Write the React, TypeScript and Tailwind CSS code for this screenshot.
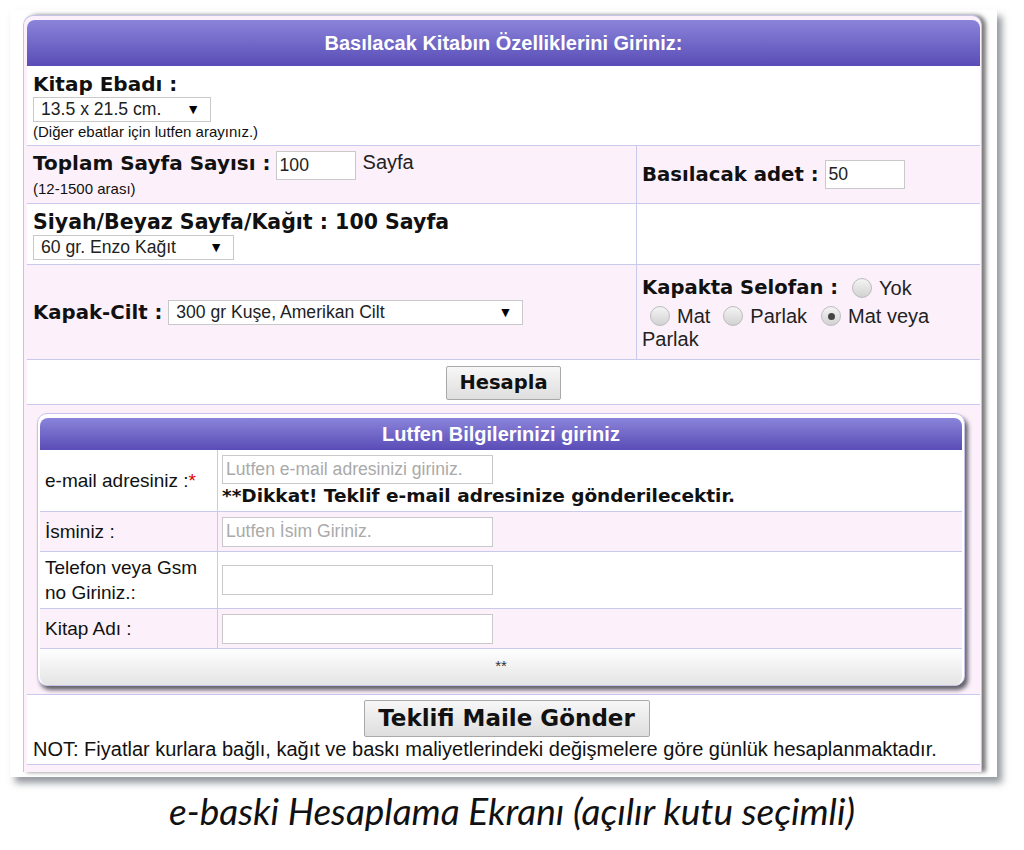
const verdana = "font-['DejaVu_Sans',sans-serif] font-bold";
const arial = "font-['Liberation_Sans',Arial,sans-serif]";

function Select({ text, width, arrowRight = 10 }: { text: string; width: number; arrowRight?: number }) {
  return (
    <div
      className={`${arial} flex h-[25px] items-center justify-between border border-[#c9c9c9] bg-white pl-[7px] text-[17.6px] text-[#222]`}
      style={{ width, paddingRight: arrowRight }}
    >
      <span>{text}</span>
      <span className="text-[14px] text-black">▼</span>
    </div>
  );
}

function TextBox({ value, width, height = 29, placeholder }: { value?: string; width: number; height?: number; placeholder?: string }) {
  return (
    <div
      className={`${arial} flex items-center border border-[#c9c9c9] bg-white px-[3px] text-[17.6px]`}
      style={{ width, height }}
    >
      {value ? <span className="text-[#222]">{value}</span> : <span className="text-[#aaa]">{placeholder}</span>}
    </div>
  );
}

function Radio({ checked }: { checked?: boolean }) {
  return (
    <span className="mr-[7px] inline-flex h-[20px] w-[20px] shrink-0 items-center justify-center rounded-full border border-[#bcbcbc] bg-gradient-to-b from-[#f4f4f4] to-[#d2d2d2]">
      {checked && <span className="h-[7px] w-[7px] rounded-full bg-[#444]" />}
    </span>
  );
}

function Button({ label, className }: { label: string; className: string }) {
  return (
    <div
      className={`${verdana} flex items-center justify-center rounded-[2px] border border-[#a9a9a9] bg-gradient-to-b from-[#f7f7f7] to-[#dedede] text-[#111] ${className}`}
    >
      {label}
    </div>
  );
}

const line = "border-b border-[#c9c9ec]";

function InfoRow({ label, h, pink, children }: { label: React.ReactNode; h: number; pink?: boolean; children: React.ReactNode }) {
  return (
    <div className={`flex ${line} ${pink ? "bg-[#fcf1fb]" : "bg-white"}`} style={{ height: h }}>
      <div className={`${arial} flex w-[178px] shrink-0 items-center border-r border-[#c9c9ec] pl-[5px] text-[19px] leading-[25px] text-[#111]`}>
        {label}
      </div>
      <div className="flex flex-1 flex-col justify-center pl-[4px]">{children}</div>
    </div>
  );
}

export default function App() {
  return (
    <div className="h-[850px] w-[1024px] bg-white">
      <div className="ml-[10px] pt-[10px]">
        <div className="h-[767px] w-[987px] bg-white pl-[13px] pt-[5px] shadow-[5px_6px_7px_rgba(60,70,80,0.55)]">
          <div className="h-[757px] w-[959px] rounded-t-[10px] border border-b-0 border-[#c5c5ea] bg-[#fcf1fb] pl-[3px] pr-[1px] pt-[4px] shadow-[4px_0_4px_rgba(90,90,90,0.8)]">
            {/* header */}
            <div className={`${arial} flex h-[46px] items-center justify-center rounded-t-[8px] bg-gradient-to-b from-[#8b84da] to-[#5a4cb6] text-[20px] font-bold text-white`}>
              Basılacak Kitabın Özelliklerini Giriniz:
            </div>

            {/* Kitap Ebadı */}
            <div className={`h-[80px] bg-white pl-[6px] pt-[6px] ${line}`}>
              <div className={`${verdana} text-[20px] leading-[25px] text-[#111]`}>Kitap Ebadı :</div>
              <Select text="13.5 x 21.5 cm." width={178} arrowRight={10} />
              <div className={`${arial} mt-[1px] text-[15px] leading-[18px] text-[#111]`}>(Diğer ebatlar için lutfen arayınız.)</div>
            </div>

            {/* Sayfa / adet */}
            <div className={`flex h-[58px] bg-[#fcf1fb] ${line}`}>
              <div className="w-[610px] border-r border-[#c9c9ec] pl-[6px] pt-[5px]">
                <div className="flex items-start">
                  <span className={`${verdana} mr-[5px] text-[20px] leading-[25px] text-[#111]`}>Toplam Sayfa Sayısı :</span>
                  <TextBox value="100" width={80} />
                  <span className={`${arial} ml-[7px] text-[20px] leading-[23px] text-[#222]`}>Sayfa</span>
                </div>
                <div className={`${arial} text-[15px] leading-[18px] text-[#111]`}>(12-1500 arası)</div>
              </div>
              <div className="flex flex-1 items-center pl-[5px]">
                <span className={`${verdana} mr-[6px] text-[19.7px] text-[#111]`}>Basılacak adet :</span>
                <TextBox value="50" width={80} />
              </div>
            </div>

            {/* Siyah/Beyaz */}
            <div className={`flex h-[61px] bg-white ${line}`}>
              <div className="w-[610px] border-r border-[#c9c9ec] pl-[6px] pt-[5px]">
                <div className={`${verdana} text-[20.5px] leading-[26px] text-[#111]`}>Siyah/Beyaz Sayfa/Kağıt : 100 Sayfa</div>
                <Select text="60 gr. Enzo Kağıt" width={201} arrowRight={10} />
              </div>
              <div className="flex-1" />
            </div>

            {/* Kapak */}
            <div className={`flex h-[95px] bg-[#fcf1fb] ${line}`}>
              <div className="flex w-[610px] items-center border-r border-[#c9c9ec] pl-[6px] pt-[1px]">
                <span className={`${verdana} mr-[6px] text-[19.7px] text-[#111]`}>Kapak-Cilt :</span>
                <Select text="300 gr Kuşe, Amerikan Cilt" width={355} arrowRight={10} />
              </div>
              <div className={`${arial} flex-1 pl-[5px] pt-[10px] text-[20px] text-[#222]`}>
                <div className="flex h-[26px] items-center">
                  <span className={`${verdana} mr-[14px] text-[19.6px] text-[#111]`}>Kapakta Selofan :</span>
                  <Radio />
                  <span>Yok</span>
                </div>
                <div className="mt-[4px] flex h-[22px] items-center pl-[8px]">
                  <Radio />
                  <span className="mr-[13px]">Mat</span>
                  <Radio />
                  <span className="mr-[14px]">Parlak</span>
                  <Radio checked />
                  <span>Mat veya</span>
                </div>
                <div className="leading-[24px]">Parlak</div>
              </div>
            </div>

            {/* Hesapla */}
            <div className={`flex h-[45px] justify-center bg-white pt-[6px] ${line}`}>
              <Button label="Hesapla" className="h-[34px] w-[115px] text-[19.5px]" />
            </div>

            {/* Bilgiler */}
            <div className={`h-[290px] bg-[#fcf1fb] pl-[10px] pt-[8px] ${line}`}>
              <div className="w-[928px] rounded-[10px] border border-[#c5c5ea] bg-white pl-[2px] pr-[2px] pt-[4px] shadow-[3px_4px_4px_rgba(70,70,80,0.85)]">
                <div className={`${arial} flex h-[32px] items-center justify-center rounded-t-[8px] bg-gradient-to-b from-[#8b84da] to-[#5a4cb6] text-[20px] font-bold text-white`}>
                  Lutfen Bilgilerinizi giriniz
                </div>
                <InfoRow
                  h={62}
                  label={
                    <span>
                      e-mail adresiniz :<span className="text-[#d00]">*</span>
                    </span>
                  }
                >
                  <TextBox width={271} placeholder="Lutfen e-mail adresinizi giriniz." />
                  <div className={`${verdana} mt-[1px] text-[18.5px] leading-[22px] text-[#111]`}>
                    **Dikkat! Teklif e-mail adresinize gönderilecektir.
                  </div>
                </InfoRow>
                <InfoRow h={40} pink label="İsminiz :">
                  <TextBox width={271} height={30} placeholder="Lutfen İsim Giriniz." />
                </InfoRow>
                <InfoRow
                  h={57}
                  label={
                    <span>
                      Telefon veya Gsm
                      <br />
                      no Giriniz.:
                    </span>
                  }
                >
                  <TextBox width={271} height={30} />
                </InfoRow>
                <InfoRow h={40} pink label="Kitap Adı :">
                  <TextBox width={271} height={30} />
                </InfoRow>
                <div className={`${arial} flex h-[36px] items-start justify-center rounded-b-[8px] bg-gradient-to-b from-white to-[#e4e4e4] pt-[6px] text-[15px] text-[#333]`}>
                  **
                </div>
              </div>
            </div>

            {/* Teklif */}
            <div className={`h-[70px] bg-white pl-[6px] pt-[5px] ${line}`}>
              <div className="flex justify-center">
                <Button label="Teklifi Maile Gönder" className="h-[37px] w-[286px] text-[23px]" />
              </div>
              <div className={`${arial} mt-[1px] text-[20px] leading-[22px] text-[#111]`}>
                NOT: Fiyatlar kurlara bağlı, kağıt ve baskı maliyetlerindeki değişmelere göre günlük hesaplanmaktadır.
              </div>
            </div>
          </div>
        </div>
      </div>

      <div className="mt-[12px] text-center font-['Lato',sans-serif] text-[37px] italic leading-[44px] text-[#111]">
        e-baski Hesaplama Ekranı (açılır kutu seçimli)
      </div>
    </div>
  );
}
